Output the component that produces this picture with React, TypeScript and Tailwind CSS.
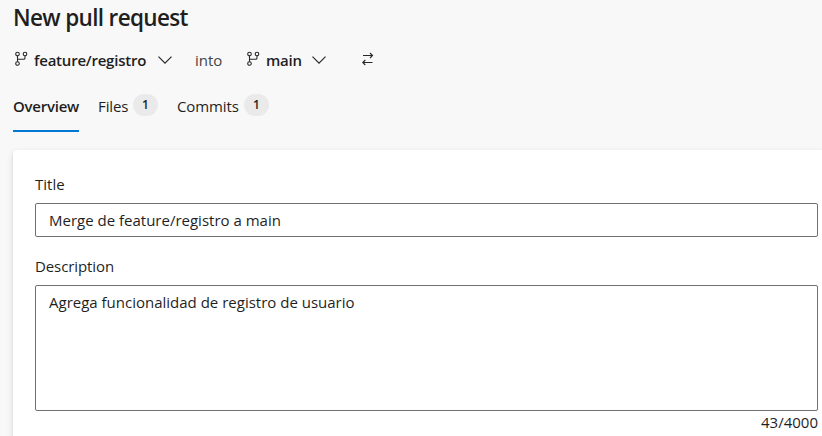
function BranchIcon() {
  return (
    <svg width="14" height="16" viewBox="0 0 14 16" fill="none" stroke="#292827" strokeWidth="1.1" className="mt-[-2px] shrink-0">
      <circle cx="2.5" cy="3" r="1.800" />
      <circle cx="10" cy="3" r="1.800" />
      <circle cx="2.5" cy="12.500" r="1.800" />
      <path d="M2.5 4.800v5.900M10 4.800v2.100c0 .9-.5 1.300-1.400 1.300H2.500" />
    </svg>
  );
}

function Chevron() {
  return (
    <svg width="14" height="8" viewBox="0 0 14 8" fill="none" stroke="#292827" strokeWidth="1.2" className="mt-[-1px] shrink-0">
      <path d="M.5.6 7 7.1 13.500.6" />
    </svg>
  );
}

function SwapIcon() {
  return (
    <svg width="12" height="14" viewBox="0 0 12 14" fill="none" stroke="#292827" strokeWidth="1.1" className="mt-[-2px] shrink-0">
      <path d="M1 3.500h9.500M8 1l2.500 2.500L8 6M10.500 10.500H.800M3.300 8 .8 10.500 3.300 13" />
    </svg>
  );
}

function Count({ value }: { value: number }) {
  return (
    <span className="mt-[-3px] flex h-[22px] w-[25px] items-center justify-center rounded-full bg-[#eaeaea] text-[12px] font-semibold">
      {value}
    </span>
  );
}

export default function App() {
  return (
    <div className="h-[436px] w-[822px] overflow-hidden bg-[#f8f8f8] pl-[13px] font-['Open_Sans','Noto_Sans',sans-serif] text-[15px] text-[#1f1f1f]">
      <h1 className="h-9 text-[22.500px] leading-[35px] font-semibold tracking-[-0.650px] whitespace-nowrap">New pull request</h1>
      <div className="flex h-12 items-center whitespace-nowrap">
        <div className="flex w-[182px] items-center pl-[2px]">
          <BranchIcon />
          <span className="ml-[5px] w-[124px] font-semibold tracking-[-0.220px]">feature/registro</span>
          <Chevron />
        </div>
        <span className="w-[52px] text-[#444]">into</span>
        <div className="flex w-[115px] items-center">
          <BranchIcon />
          <span className="ml-[5px] w-[46px] font-semibold tracking-[-0.250px]">main</span>
          <Chevron />
        </div>
        <SwapIcon />
      </div>
      <nav className="flex h-[48px] items-start whitespace-nowrap">
        <div className="flex h-[48px] w-[66px] items-center border-b-2 border-[#0078d4] pb-[1px] font-semibold tracking-[-0.250px]">
          Overview
        </div>
        <div className="ml-[19px] flex h-[45px] items-center">
          <span className="w-[35px] tracking-[-0.100px]">Files</span>
          <Count value={1} />
        </div>
        <div className="ml-[19px] flex h-[45px] items-center">
          <span className="w-[67px] tracking-[-0.100px]">Commits</span>
          <Count value={1} />
        </div>
      </nav>
      <main className="mt-[18px] h-[310px] rounded-tl-[4px] bg-white pt-[23px] pr-[4px] pl-[22px] shadow-[0_3px_7px_rgba(0,0,0,0.13),0_1px_2px_rgba(0,0,0,0.1)]">
        <div className="h-[30px] leading-[22px]">Title</div>
        <div className="flex h-[34px] items-center rounded-[2px] border border-[#707070] px-[13px]">
          Merge de feature/registro a main
        </div>
        <div className="mt-[18px] h-[30px] leading-[22px] tracking-[-0.100px]">Description</div>
        <div className="h-[126px] rounded-[2px] border border-[#707070] px-[13px] pt-[5px] leading-[22px]">
          Agrega funcionalidad de registro de usuario
        </div>
        <div className="text-right leading-[22px]">43/4000</div>
      </main>
    </div>
  );
}
